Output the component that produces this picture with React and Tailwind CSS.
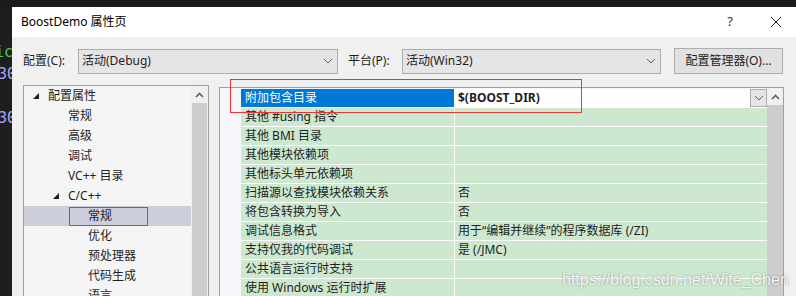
import React from "react";

const FONT = "font-['Noto_Sans','Noto_Sans_CJK_SC',sans-serif]";

const TREE = [
  { text: "配置属性", level: 0, open: true },
  { text: "常规", level: 1 },
  { text: "高级", level: 1 },
  { text: "调试", level: 1 },
  { text: "VC++ 目录", level: 1 },
  { text: "C/C++", level: 1, open: true },
  { text: "常规", level: 2, selected: true },
  { text: "优化", level: 2 },
  { text: "预处理器", level: 2 },
  { text: "代码生成", level: 2 },
  { text: "语言", level: 2 },
];

const PROPS = [
  ["附加包含目录", "$(BOOST_DIR)"],
  ["其他 #using 指令", ""],
  ["其他 BMI 目录", ""],
  ["其他模块依赖项", ""],
  ["其他标头单元依赖项", ""],
  ["扫描源以查找模块依赖关系", "否"],
  ["将包含转换为导入", "否"],
  ["调试信息格式", "用于“编辑并继续”的程序数据库 (/ZI)"],
  ["支持仅我的代码调试", "是 (/JMC)"],
  ["公共语言运行时支持", ""],
  ["使用 Windows 运行时扩展", ""],
];

const Chevron = () => (
  <svg width="10" height="6" viewBox="0 0 10 6" fill="none">
    <path d="M1 1 L5 5 L9 1" stroke="#606060" strokeWidth="1" />
  </svg>
);

const UpArrow = () => (
  <svg width="9" height="6" viewBox="0 0 9 6" fill="none">
    <path d="M1 5 L4.5 1.5 L8 5" stroke="#606060" strokeWidth="1.6" />
  </svg>
);

const Triangle = () => (
  <svg width="6" height="6" viewBox="0 0 6 6">
    <polygon points="6,0 6,6 0,6" fill="#1e1e1e" />
  </svg>
);

const Combo = ({ text, width }) => (
  <div className={`${width} h-[25px] flex items-center justify-between bg-[#e5e5e5] border border-[#adadad] pl-[3px] pr-[4px]`}>
    <span className="text-[12px] text-[#1e1e1e]">{text}</span>
    <Chevron />
  </div>
);

const App = () => {
  return (
    <div className={`${FONT} w-[796px] h-[296px] overflow-hidden bg-[#1e1e1e] relative`}>
      <div className="h-[7px] bg-[#1b1b1b]" />
      <div className="flex h-[289px]">
        {/* editor strip behind the dialog */}
        <div className="w-[12px] shrink-0 overflow-hidden font-['DejaVu_Sans_Mono',monospace] text-[15px] leading-none">
          <div className="h-[38px]" />
          <div className="-ml-[5px] text-[#4ec94e] h-[22px]">ic</div>
          <div className="-ml-[2px] text-[#a8a8ff] h-[44px]">30</div>
          <div className="-ml-[2px] text-[#a8a8ff]">30</div>
        </div>

        {/* dialog */}
        <div className="flex-1 flex flex-col min-h-0">
          <div className="h-[30px] shrink-0 bg-white flex items-center pl-[9px] pr-[14px]">
            <span className="text-[12px] text-[#000]">BoostDemo 属性页</span>
            <span className="ml-auto text-[13px] text-[#333] mr-[37px]">?</span>
            <svg width="12" height="12" viewBox="0 0 12 12">
              <path d="M1 1 L11 11 M11 1 L1 11" stroke="#222" strokeWidth="1" />
            </svg>
          </div>

          <div className="flex-1 min-h-0 overflow-hidden bg-[#f0f0f0] pl-[11px] pr-[12px] pt-[11px] flex flex-col">
            {/* config row */}
            <div className="flex shrink-0 items-center h-[26px]">
              <span className="w-[55px] text-[12px] text-[#1e1e1e]">配置(C):</span>
              <Combo text="活动(Debug)" width="w-[260px]" />
              <span className="ml-[10px] w-[54px] text-[12px] text-[#1e1e1e]">平台(P):</span>
              <Combo text="活动(Win32)" width="w-[259px]" />
              <div className="ml-[13px] w-[109px] h-[26px] flex items-center justify-center bg-[#e1e1e1] border border-[#adadad] text-[12px] text-[#1e1e1e]">
                配置管理器(O)...
              </div>
            </div>

            <div className="flex mt-[11px] flex-1 min-h-0">
              {/* tree */}
              <div className="w-[186px] border border-[#a0a0a0] border-b-0 bg-[#f5f5f5] flex overflow-hidden">
                <div className="flex-1 flex flex-col">
                  {TREE.map((item, i) => (
                    <div
                      key={i}
                      className={`relative h-[20px] shrink-0 flex items-center text-[12px] text-[#1e1e1e] ${item.selected ? "bg-[#cccedb]" : ""}`}
                    >
                      <div className={`flex items-center ${item.level === 0 ? "pl-[9px]" : item.level === 1 ? "pl-[29px]" : "pl-[64px]"}`}>
                        {item.open ? (
                          <span className="w-[15px] flex items-center"><Triangle /></span>
                        ) : null}
                        <span className={item.level === 1 && !item.open ? "pl-[15px]" : ""}>{item.text}</span>
                      </div>
                      {item.selected ? (
                        <div className="absolute left-[45px] top-[1px] w-[79px] h-[19px] border border-[#e33]" />
                      ) : null}
                    </div>
                  ))}
                </div>
                <div className="w-[17px] bg-[#f0f0f0] flex flex-col">
                  <div className="h-[17px] shrink-0 flex items-center justify-center"><UpArrow /></div>
                  <div className="flex-1 mx-[1px] bg-[#cdcdcd]" />
                </div>
              </div>

              {/* property grid */}
              <div className="ml-[10px] mt-[2px] w-[565px] border border-[#a0a0a0] border-b-0 bg-[#f5f7fb] flex overflow-hidden">
                <div className="w-[21px] shrink-0" />
                <div className="flex-1 flex flex-col pt-[1px]">
                  {PROPS.map(([name, value], i) => (
                    <div key={i} className="h-[19px] shrink-0 flex border-b border-white">
                      <div
                        className={`w-[214px] flex items-center pl-[4px] text-[12px] border-r border-white ${i === 0 ? "bg-[#0078d7] text-white" : "bg-[#cde8cf] text-[#1e1e1e]"}`}
                      >
                        {name}
                      </div>
                      <div
                        className={`flex-1 flex items-center pl-[3px] text-[12px] text-[#1e1e1e] ${i === 0 ? "bg-white font-bold" : "bg-[#cde8cf]"}`}
                      >
                        <span>{value}</span>
                        {i === 0 ? (
                          <div className="ml-auto w-[17px] h-[18px] bg-[#e5e5e5] border border-[#adadad] flex items-center justify-center">
                            <Chevron />
                          </div>
                        ) : null}
                      </div>
                    </div>
                  ))}
                </div>
                <div className="w-[16px] shrink-0 bg-[#f0f0f0] flex flex-col">
                  <div className="h-[17px] shrink-0 flex items-center justify-center"><UpArrow /></div>
                  <div className="flex-1 bg-[#cdcdcd]" />
                </div>
              </div>
            </div>
          </div>
        </div>
      </div>

      {/* annotation box */}
      <div className="absolute left-[230px] top-[79px] w-[352px] h-[34px] border border-[#e33]" />

      {/* watermark */}
      <div className="absolute left-[562px] top-[268px] text-[16px] font-['Liberation_Sans',sans-serif] text-white/90 [text-shadow:0_0_2px_rgba(0,0,0,0.45)]">
        https://blog.csdn.net/Wite_Chen
      </div>
    </div>
  );
};

export default App;
